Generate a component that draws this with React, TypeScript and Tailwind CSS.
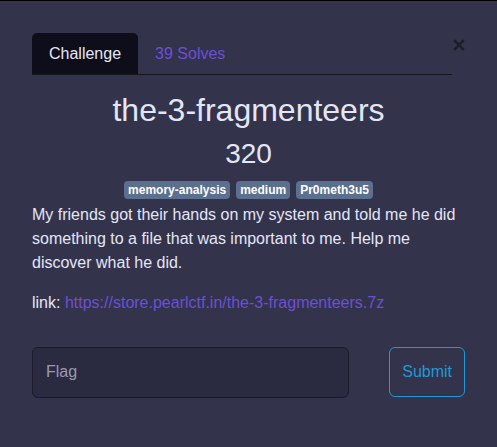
import React from 'react';

const tags = ['memory-analysis', 'medium', 'Pr0meth3u5'];

export default function App() {
  return (
    <div
      className="min-h-[447px] bg-[#33334b] border-t border-black text-[#e3e6f8]"
      style={{ fontFamily: '"Liberation Sans", Arial, sans-serif' }}
    >
      <div className="px-[32px] pt-[32px] w-[497px]">
        {/* Tabs + close */}
        <div className="flex items-start">
          <div className="flex-1 flex border-b border-[#16161f]">
            <div className="h-[41px] px-[17px] pt-px flex items-center bg-[#0e0e1b] rounded-t-[5px] text-[16px] text-[#e3e6f8] -mb-px">
              Challenge
            </div>
            <div className="h-[41px] px-[17px] pt-px flex items-center text-[16px] text-[#6c4fd6]">
              39 Solves
            </div>
          </div>
          <button className="w-[13px] mt-[6px] pl-px">
            <svg width="12" height="12" viewBox="0 0 12 12" className="block">
              <path d="M1.2 1.2 L10.8 10.8 M10.8 1.2 L1.2 10.8" stroke="#1d1d2c" strokeWidth="2.6" strokeLinecap="butt" />
            </svg>
          </button>
        </div>

        {/* Title */}
        <div className="text-center mt-4">
          <h2 className="text-[32px] leading-[1.2] mb-2">the-3-fragmenteers</h2>
          <h3 className="text-[28px] leading-[1.2] mb-2">320</h3>
          <div className="flex justify-center gap-[6px] pt-[2px] pb-[4px]">
            {tags.map((t) => (
              <span
                key={t}
                className="inline-block bg-[#5b6f8f] text-white text-[12px] font-bold leading-none px-[4px] py-[3px] rounded-[4px]"
              >
                {t}
              </span>
            ))}
          </div>
        </div>

        {/* Description */}
        <p className="text-[16px] leading-[24px] mb-4">
          My friends got their hands on my system and told me he did something to a file that was important to me. Help me discover what he did.
        </p>
        <p className="text-[16px] leading-[24px]">
          link: <a className="text-[#6c4fd6]" href="#">https://store.pearlctf.in/the-3-fragmenteers.7z</a>
        </p>

        {/* Flag form */}
        <div className="flex items-start pt-[32px]">
          <input
            placeholder="Flag"
            className="w-[317px] h-[51px] bg-[#2a2a40] border border-[#1a1a29] rounded-[6px] pl-[13px] text-[16px] text-[#e3e6f8] placeholder:text-[#9a9ab4] outline-none"
          />
          <div className="flex-1 flex justify-end">
            <button className="border border-[#1f9ad6] text-[#1f9ad6] rounded-[6px] px-3 py-3 text-[16px] leading-[24px]">
              Submit
            </button>
          </div>
        </div>
      </div>
    </div>
  );
}
